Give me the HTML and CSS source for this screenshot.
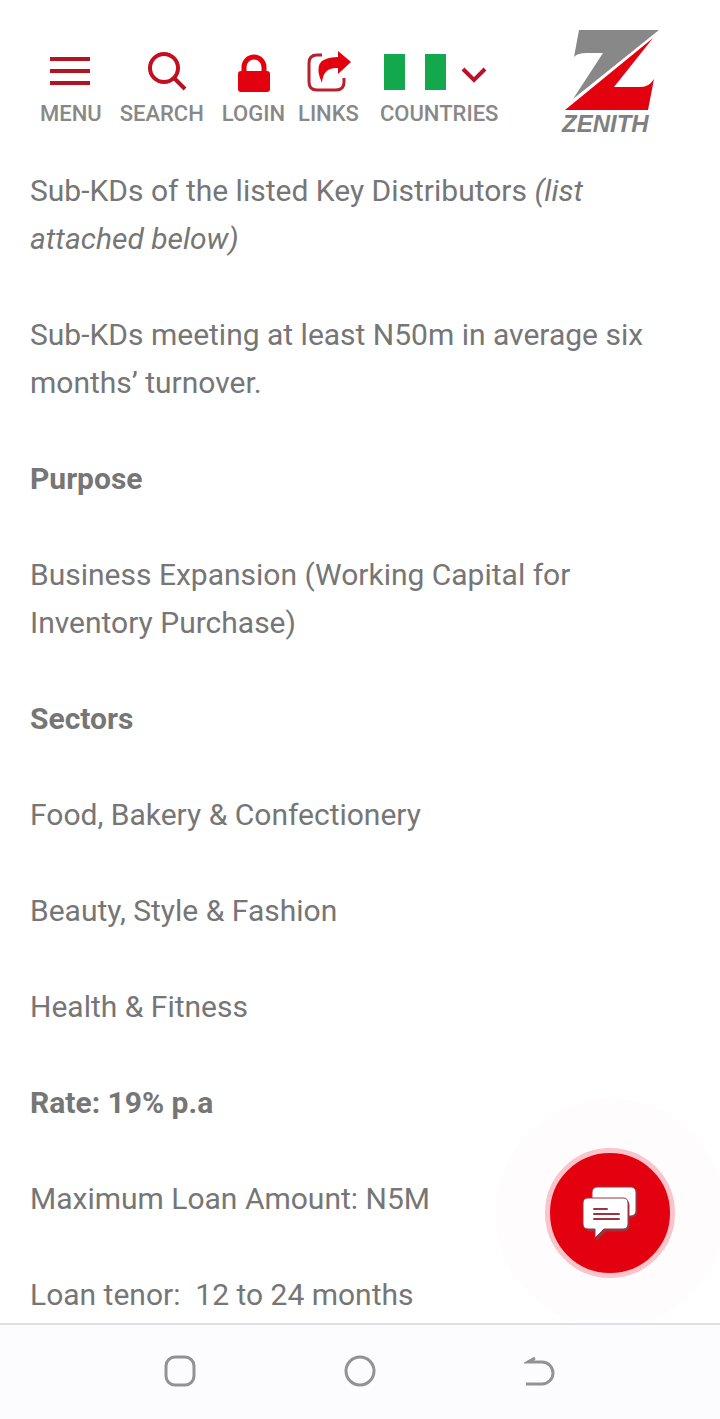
FILE: index.html
```html
<!DOCTYPE html>
<html lang="en">
<head>
	<meta charset="utf-8"/>
	<meta name="viewport" content="width=device-width, initial-scale=1">
	<title>Zenith Bank</title>
	<link rel="stylesheet" href="styles.css">
</head>
<body>
	<header class="header">
		<nav class="menu">
			<button type="button" class="menu-item">
				<svg class="icon" width="44" height="44" viewBox="0 0 44 44">
					<path d="M1 9h40M1 21h40M1 33h40" stroke="#b3141f" stroke-width="4" fill="none"/>
				</svg>
				<span>MENU</span>
			</button>
			<button type="button" class="menu-item">
				<svg class="icon" width="56" height="44" viewBox="0 0 56 44">
					<circle cx="30" cy="18" r="14" stroke="#c40f20" stroke-width="4" fill="none"/>
					<path d="M40 28l11 11" stroke="#b3141f" stroke-width="4" fill="none"/>
				</svg>
				<span>SEARCH</span>
			</button>
			<a href="#" class="menu-item login">
				<svg class="icon" width="44" height="44" viewBox="0 0 44 44">
					<path d="M13 24v-7a10 10 0 0 1 20 0v7" stroke="#e3000f" stroke-width="5" fill="none"/>
					<rect x="7" y="21" width="32" height="21" rx="3" fill="#e3000f"/>
				</svg>
				<span>LOGIN</span>
			</a>
			<a href="#" class="menu-item">
				<svg class="icon" width="46" height="44" viewBox="0 0 46 44">
					<path d="M17 5h-5q-8 0-8 8v19q0 8 8 8h19q8 0 8-8v-4" stroke="#b8202c" stroke-width="3" fill="none"/>
					<path d="M33 1l13 11-13 12v-6q-15-1-16 15-12-26 16-26z" fill="#e3000f"/>
				</svg>
				<span>LINKS</span>
			</a>
			<button type="button" class="menu-item countries">
				<svg class="icon" width="112" height="44" viewBox="0 0 112 44">
					<path d="M0 4h21v36H0zM41 4h21v36H41z" fill="#12a84b"/>
					<path d="M79 19l11 11 11-11" stroke="#b8122c" stroke-width="4" fill="none"/>
				</svg>
				<span>COUNTRIES</span>
			</button>
		</nav>
		<a href="#" class="logo">
			<svg width="98" height="82" viewBox="562 28 98 82">
				<path d="M579 30h80L573 99l30-46h-16q-10 0-13 4z" fill="#888"/>
				<path d="M653 38l-88 72h83l6-31q-5 8-13 8h-27z" fill="#e3000f"/>
			</svg>
			<span>ZENITH</span>
		</a>
	</header>

	<main class="content">
		<p>Sub-KDs of the listed Key Distributors <em>(list attached below)</em></p>
		<p>Sub-KDs meeting at least N50m in average six months’ turnover.</p>
		<p><strong>Purpose</strong></p>
		<p>Business Expansion (Working Capital for Inventory Purchase)</p>
		<p><strong>Sectors</strong></p>
		<p>Food, Bakery &amp; Confectionery</p>
		<p>Beauty, Style &amp; Fashion</p>
		<p>Health &amp; Fitness</p>
		<p><strong>Rate: 19% p.a</strong></p>
		<p>Maximum Loan Amount: N5M</p>
		<p>Loan tenor: &nbsp;12 to 24 months</p>
	</main>

	<button type="button" class="chat" aria-label="Chat">
		<svg width="60" height="60" viewBox="0 0 60 60">
			<g stroke="#9b3440" stroke-width="1">
				<rect x="13" y="5" width="44" height="29" rx="5" fill="#9b3440"/>
				<rect x="12" y="4" width="44" height="29" rx="5" fill="#fff"/>
				<path d="M8 17h36q5 0 5 5v21q0 5-5 5H26l-9 9v-9H8z" fill="#9b3440"/>
				<path d="M8 15h35q5 0 5 5v21q0 5-5 5H24l-9 9v-9H8q-5 0-5-5V20q0-5 5-5z" fill="#fff"/>
			</g>
			<path d="M14 26h13M14 31h25M14 36h25" stroke="#9b3440" stroke-width="2" stroke-linecap="round"/>
		</svg>
	</button>

	<footer class="navbar">
		<button type="button" aria-label="Recent apps">
			<svg width="32" height="32" viewBox="0 0 32 32">
				<rect x="2" y="2" width="28" height="28" rx="9"/>
			</svg>
		</button>
		<button type="button" aria-label="Home">
			<svg width="32" height="32" viewBox="0 0 32 32">
				<circle cx="16" cy="16" r="14"/>
			</svg>
		</button>
		<button type="button" aria-label="Back">
			<svg width="32" height="32" viewBox="0 0 32 32">
				<path d="M11 3L4 7h14a11 11 0 0 1 0 22H2"/>
			</svg>
		</button>
	</footer>
</body>
</html>
```
FILE: styles.css
```css
* {
	box-sizing: border-box;
}

body {
	display: flex;
	flex-direction: column;
	min-height: 100vh;
	margin: 0;
	font-family: Roboto, sans-serif;
	color: #767676;
	background: white;
}

button {
	padding: 0;
	border: none;
	background: none;
	font: inherit;
	color: inherit;
}

a {
	color: inherit;
	text-decoration: none;
}

svg {
	display: block;
}

.header {
	display: flex;
	justify-content: space-between;
	align-items: flex-start;
	padding: 28px 60px 29px 40px;
}

.menu {
	display: flex;
	gap: 18px;
	padding-top: 22px;
}

.menu-item {
	display: flex;
	flex-direction: column;
	align-items: center;
	gap: 7px;
	font-size: 22px;
	line-height: 26px;
	font-weight: 500;
	color: #888888;
}

.login {
	margin-right: -5px;
}

.countries {
	align-items: flex-start;
	margin-left: 3px;
}

.countries .icon {
	margin-left: 4px;
}

.logo {
	font: italic bold 24px/28px "Liberation Sans", sans-serif;
	color: #808080;
}

.logo span {
	display: block;
}

.content {
	flex: 1;
	padding: 0 30px;
	font-size: 30px;
	line-height: 48px;
}

.content p {
	margin: 0 0 48px;
}

.content p:last-child {
	margin-bottom: 4px;
}

.chat {
	display: flex;
	align-items: center;
	justify-content: center;
	position: fixed;
	right: 45px;
	bottom: 141px;
	width: 130px;
	height: 130px;
	border: 5px solid #f9c4ca;
	border-radius: 50%;
	background: #e3000f;
	box-shadow: 0 0 0 50px rgba(227, 0, 60, 0.01);
}

/* keeps the chat halo under the bar */
.navbar {
	display: flex;
	justify-content: center;
	align-items: center;
	gap: 148px;
	position: relative;
	height: 96px;
	padding-bottom: 2px;
	border-top: 2px solid #dfe0e3;
	background: #fcfcff;
}

.navbar svg {
	fill: none;
	stroke: #929292;
	stroke-width: 3;
}
```
